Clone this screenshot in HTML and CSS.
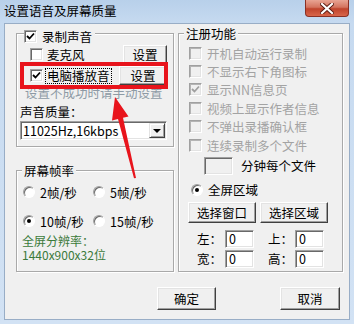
FILE: index.html
```html
<!DOCTYPE html>
<html lang="zh-CN">
<head>
  <meta charset="UTF-8" />
  <title>设置语音及屏幕质量</title>
  <link rel="stylesheet" href="styles.css">
</head>
<body>

  <div class="window">
    <!-- 标题栏 -->
    <div class="titlebar">
      <span class="title">设置语音及屏幕质量</span>
      <span class="close-btn">
        <svg width="14" height="11" viewBox="0 0 14 11">
          <path d="M2 1 L12 10 M12 1 L2 10" stroke="#5a1a10" stroke-width="4" stroke-linecap="square" fill="none"/>
          <path d="M2 1 L12 10 M12 1 L2 10" stroke="#fff" stroke-width="2.2" stroke-linecap="square" fill="none"/>
        </svg>
      </span>
    </div>

    <div class="client">
      <div class="columns">

        <div class="col-left">
          <!-- 录制声音 -->
          <div class="group group-audio">
            <div class="group-title">
              <span class="chk"><svg width="9" height="9" viewBox="0 0 9 9"><path d="M1 4 L3.5 6.5 L8 1.5" stroke="#000" stroke-width="1.8" fill="none"/></svg></span>
              <span>录制声音</span>
            </div>
            <div class="src-row">
              <span class="chk"></span>
              <span class="lbl">麦克风</span>
              <button class="btn btn-set">设置</button>
            </div>
            <div class="src-row">
              <span class="chk"><svg width="9" height="9" viewBox="0 0 9 9"><path d="M1 4 L3.5 6.5 L8 1.5" stroke="#000" stroke-width="1.8" fill="none"/></svg></span>
              <span class="focus">电脑播放音</span>
              <button class="btn btn-set wide">设置</button>
            </div>
            <div class="hint">设置不成功时请手动设置</div>
            <div class="quality">声音质量：</div>
            <div class="combo">
              <span class="combo-text">11025Hz,16kbps</span>
              <span class="combo-arrow"><span class="tri"></span></span>
            </div>
          </div>

          <!-- 屏幕帧率 -->
          <div class="group group-fps">
            <div class="group-title">屏幕帧率</div>
            <div class="radio-row">
              <span class="radio-item"><span class="radio"></span>2帧/秒</span>
              <span class="radio-item"><span class="radio"></span>5帧/秒</span>
            </div>
            <div class="radio-row second">
              <span class="radio-item"><span class="radio on"></span>10帧/秒</span>
              <span class="radio-item"><span class="radio"></span>15帧/秒</span>
            </div>
            <div class="res">全屏分辨率：<br>1440x900x32位</div>
          </div>
        </div>

        <!-- 注册功能 -->
        <div class="group group-reg">
          <div class="group-title">注册功能</div>
          <div class="chk-row first"><span class="chk off"></span>开机自动运行录制</div>
          <div class="chk-row"><span class="chk off"></span>不显示右下角图标</div>
          <div class="chk-row"><span class="chk off"><svg width="9" height="9" viewBox="0 0 9 9"><path d="M1 4 L3.5 6.5 L8 1.5" stroke="#a0a0a0" stroke-width="1.8" fill="none"/></svg></span>显示NN信息页</div>
          <div class="chk-row"><span class="chk off"></span>视频上显示作者信息</div>
          <div class="chk-row"><span class="chk off"></span>不弹出录播确认框</div>
          <div class="chk-row"><span class="chk off"></span>连续录制多个文件</div>
          <div class="minute-row">
            <span class="field off minutes"></span>
            <span>分钟每个文件</span>
          </div>
          <div class="radio-row area">
            <span class="radio on"></span>全屏区域
          </div>
          <div class="area-btns">
            <button class="btn">选择窗口</button>
            <button class="btn">选择区域</button>
          </div>
          <div class="coord-row">
            <span class="coord-lbl">左：</span><span class="field">0</span>
            <span class="coord-lbl right">上：</span><span class="field">0</span>
          </div>
          <div class="coord-row second">
            <span class="coord-lbl">宽：</span><span class="field">0</span>
            <span class="coord-lbl right">高：</span><span class="field">0</span>
          </div>
        </div>

      </div>

      <div class="actions">
        <button class="btn btn-ok">确定</button>
        <button class="btn btn-cancel">取消</button>
      </div>
    </div>

    <!-- 标注 -->
    <div class="highlight"></div>
    <svg class="arrow" width="354" height="324" viewBox="0 0 354 324">
      <polygon points="115,97 128.5,116.5 123,117.8 136,178 134,178.3 118,119 112,120.5" fill="#e8141c"/>
    </svg>
  </div>

</body>
</html>
```

FILE: styles.css
```css
html, body {
  margin: 0;
  padding: 0;
}
body {
  font-family: "Noto Sans CJK SC", sans-serif;
  font-size: 12.5px;
  line-height: 13px;
  color: #000;
}
.window {
  position: relative;
  width: 354px;
  height: 324px;
  box-sizing: border-box;
  padding: 0 4px 4px;
  background: linear-gradient(to bottom, #b8d0ea 0, #c6daf0 23px, #d2e2f4 100%);
  display: flex;
  flex-direction: column;
}
.titlebar {
  height: 23px;
  display: flex;
  align-items: flex-start;
  flex-shrink: 0;
}
.title {
  margin-top: 4px;
}
.close-btn {
  margin-left: auto;
  margin-right: 1px;
  width: 44px;
  height: 17px;
  box-sizing: border-box;
  border: 1px solid #8a3024;
  border-top: none;
  border-radius: 0 0 4px 4px;
  background: linear-gradient(to bottom, #e8a493 0, #d4745f 45%, #c0442c 55%, #d8654a 100%);
  display: flex;
  align-items: center;
  justify-content: center;
}
.client {
  flex: 1;
  background: #f0f0f0;
  border: 1px solid #98adc6;
  padding: 9px 6px 0 11px;
  display: flex;
  flex-direction: column;
}
.columns {
  display: flex;
  gap: 4px;
}
.col-left {
  width: 158px;
  display: flex;
  flex-direction: column;
}

/* group box */
.group {
  box-sizing: border-box;
  border: 1px solid #a9a9a9;
  box-shadow: inset 1px 1px #fff, 1px 1px #fff;
  display: flex;
  flex-direction: column;
}
.group-title {
  align-self: flex-start;
  background: #f0f0f0;
  height: 13px;
  padding: 0 2px;
  display: flex;
  align-items: center;
  white-space: nowrap;
}

/* 录制声音 */
.group-audio {
  height: 114px;
  padding: 0 6px 0 3px;
}
.group-audio .group-title {
  margin: -4px 0 0 4px;
  padding: 0 3px 0 0;
  gap: 5px;
}
.src-row {
  height: 19px;
  margin-top: 2px;
  display: flex;
  align-items: center;
}
.src-row .chk {
  margin-left: 10px;
}
.src-row .lbl {
  margin-left: 4px;
}
.focus {
  margin-left: 2px;
  padding: 0 1px;
  border: 1px dotted #000;
  line-height: 14px;
}
.btn-set {
  margin-left: auto;
  width: 44px;
  height: 19px;
}
.btn-set.wide {
  width: 48px;
}
.hint {
  margin-top: 1px;
  padding-left: 5px;
  color: #8d9aa5;
  white-space: nowrap;
}
.quality {
  margin-top: 6px;
}
.combo {
  margin-top: 3px;
  height: 19px;
  box-sizing: border-box;
  background: #fff;
  border: 1px solid;
  border-color: #a0a0a0 #fff #fff #a0a0a0;
  box-shadow: inset 1px 1px #696969, inset -1px -1px #e3e3e3;
  padding: 0 1px 0 2px;
  display: flex;
  align-items: center;
}
.combo-arrow {
  margin-left: auto;
  width: 16px;
  height: 15px;
  box-sizing: border-box;
  background: #f0f0f0;
  border: 1px solid;
  border-color: #e3e3e3 #404040 #404040 #e3e3e3;
  box-shadow: inset 1px 1px #fff, inset -1px -1px #a0a0a0;
  display: flex;
  align-items: center;
  justify-content: center;
}
.tri {
  width: 0;
  height: 0;
  border-left: 4px solid transparent;
  border-right: 4px solid transparent;
  border-top: 4px solid #000;
}

/* 屏幕帧率 */
.group-fps {
  margin-top: 23px;
  height: 102px;
  padding: 0 0 0 6px;
}
.group-fps .group-title {
  margin: -7px 0 0 -1px;
}
.radio-row {
  height: 14px;
  margin-top: 8px;
  display: flex;
  align-items: center;
}
.radio-row.second {
  margin-top: 15px;
}
.radio-item {
  width: 70px;
  display: flex;
  align-items: center;
  gap: 5px;
}
.res {
  margin: 6px 0 0 -1px;
  font-size: 12px;
  line-height: 13.5px;
  color: #3b7a3b;
}

/* 注册功能 */
.group-reg {
  width: 165px;
  height: 239px;
  padding: 0 0 0 10px;
}
.group-reg .group-title {
  margin: -7px 0 0 -5px;
}
.chk-row {
  height: 18.4px;
  display: flex;
  align-items: center;
  gap: 5px;
  color: #a3a3a3;
}
.chk-row.first {
  margin-top: 4px;
}
.minute-row {
  margin-top: 2.6px;
  display: flex;
  align-items: center;
  gap: 8px;
}
.minutes {
  margin-left: 15px;
  width: 28px;
}
.radio-row.area {
  gap: 5px;
}
.radio-row.area .radio {
  margin-left: 2px;
}
.area-btns {
  margin: 5px 0 0 -1px;
  display: flex;
  gap: 4px;
}
.area-btns .btn {
  width: 68px;
  height: 21px;
}
.coord-row {
  margin-top: 7px;
  padding-left: 8px;
  display: flex;
  align-items: center;
}
.coord-row.second {
  margin-top: 2px;
}
.coord-lbl {
  width: 28px;
}
.coord-lbl.right {
  margin-left: 14px;
  width: 27px;
}

/* controls */
.chk {
  width: 13px;
  height: 13px;
  box-sizing: border-box;
  flex-shrink: 0;
  background: #fff;
  border: 1px solid;
  border-color: #a0a0a0 #fff #fff #a0a0a0;
  box-shadow: inset 1px 1px #696969, inset -1px -1px #e3e3e3;
  display: flex;
  align-items: center;
  justify-content: center;
}
.chk.off {
  background: #f0f0f0;
  box-shadow: inset 1px 1px #b4b4b4, inset -1px -1px #e3e3e3;
}
.radio {
  width: 12px;
  height: 12px;
  box-sizing: border-box;
  flex-shrink: 0;
  border-radius: 50%;
  background: #fff;
  border: 1px solid;
  border-color: #a0a0a0 #fff #fff #a0a0a0;
  box-shadow: inset 1px 1px #696969;
  display: grid;
  place-items: center;
}
.radio.on::after {
  content: '';
  width: 4px;
  height: 4px;
  border-radius: 50%;
  background: #000;
}
.field {
  width: 29px;
  height: 18px;
  box-sizing: border-box;
  background: #fff;
  border: 1px solid;
  border-color: #a0a0a0 #fff #fff #a0a0a0;
  box-shadow: inset 1px 1px #696969, inset -1px -1px #e3e3e3;
  padding-left: 3px;
  line-height: 16px;
}
.field.off {
  background: #f0f0f0;
}
.btn {
  font: inherit;
  color: #000;
  padding: 0;
  background: #f0f0f0;
  border: 1px solid;
  border-color: #fff #404040 #404040 #fff;
  box-shadow: inset -1px -1px #a0a0a0, inset 1px 1px #e3e3e3;
  white-space: nowrap;
}

/* 确定 / 取消 */
.actions {
  margin-top: 15px;
  display: flex;
}
.btn-ok {
  margin-left: 141px;
  width: 59px;
  height: 23px;
}
.btn-cancel {
  margin-left: 64px;
  width: 60px;
  height: 23px;
}

/* 标注 */
.highlight {
  position: absolute;
  left: 20px;
  top: 62px;
  width: 148px;
  height: 27px;
  box-sizing: border-box;
  border: 4px solid #e8141c;
}
.arrow {
  position: absolute;
  left: 0;
  top: 0;
  pointer-events: none;
}
```
